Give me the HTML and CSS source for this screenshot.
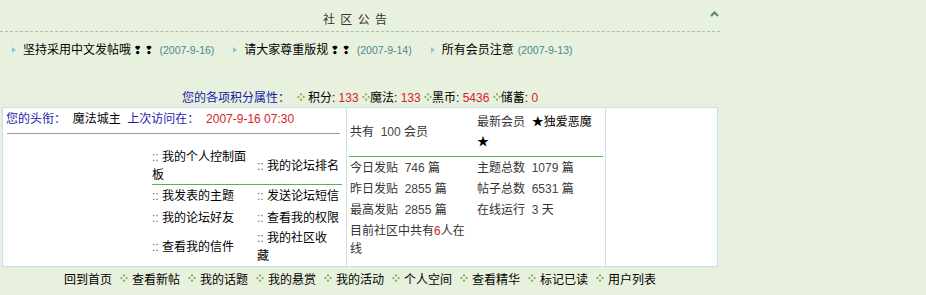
FILE: index.html
```html
<!DOCTYPE html>
<html lang="zh-CN">
<head>
    <meta charset="UTF-8">
    <meta name="viewport" content="width=device-width, initial-scale=1.0">
    <title>社区公告</title>
    <link rel="stylesheet" href="styles.css">
</head>
<body>
    <svg class="defs" width="0" height="0">
        <symbol id="clover" viewBox="0 0 9 9">
            <polygon points="4.5,0 6,1.5 4.5,3 3,1.5" />
            <polygon points="1.5,3 3,4.5 1.5,6 0,4.5" />
            <polygon points="7.5,3 9,4.5 7.5,6 6,4.5" />
            <polygon points="4.5,6 6,7.5 4.5,9 3,7.5" />
        </symbol>
    </svg>

    <div class="page">
        <div class="notice-head">
            <span class="notice-title">社 区 公 告</span>
            <svg class="fold" width="9" height="6" viewBox="0 0 9 6"><polyline points="1,5 4.5,1.5 8,5" /></svg>
        </div>
        <ul class="notice-list">
            <li><span class="arrow"></span>坚持采用中文发帖哦<span class="bang">❢❢</span><span class="date">(2007-9-16)</span></li>
            <li><span class="arrow"></span>请大家尊重版规<span class="bang">❢❢</span><span class="date">(2007-9-14)</span></li>
            <li><span class="arrow"></span>所有会员注意<span class="date">(2007-9-13)</span></li>
        </ul>

        <div class="credits">
            <span class="blue">您的各项积分属性：</span>&nbsp; <svg class="clover"><use href="#clover" /></svg> 积分: <span class="red">133</span> <svg class="clover"><use href="#clover" /></svg>魔法: <span class="red">133</span> <svg class="clover"><use href="#clover" /></svg>黑币: <span class="red">5436</span> <svg class="clover"><use href="#clover" /></svg>储蓄: <span class="red">0</span>
        </div>

        <table class="info">
            <tr>
                <td class="user">
                    <div class="user-line">
                        <span class="blue">您的头衔：</span>&nbsp; 魔法城主&nbsp; <span class="blue">上次访问在：</span>&nbsp; <span class="red">2007-9-16 07:30</span>
                    </div>
                    <div class="rule"></div>
                    <table class="links">
                        <tr class="first">
                            <td class="c1"><span class="dots">::</span> 我的个人控制面板</td>
                            <td class="c2"><span class="dots">::</span> 我的论坛排名</td>
                        </tr>
                        <tr>
                            <td class="c1"><span class="dots">::</span> 我发表的主题</td>
                            <td class="c2"><span class="dots">::</span> 发送论坛短信</td>
                        </tr>
                        <tr>
                            <td class="c1"><span class="dots">::</span> 我的论坛好友</td>
                            <td class="c2"><span class="dots">::</span> 查看我的权限</td>
                        </tr>
                        <tr>
                            <td class="c1"><span class="dots">::</span> 查看我的信件</td>
                            <td class="c2"><span class="dots">::</span> 我的社区收<br>藏</td>
                        </tr>
                    </table>
                </td>
                <td class="stats">
                    <table class="stat-table">
                        <tr class="head">
                            <td class="s1">共有&nbsp; <span class="num">100</span> 会员</td>
                            <td>最新会员&nbsp; <span class="member">★独爱恶魔<br>★</span></td>
                        </tr>
                        <tr>
                            <td class="s1">今日发贴&nbsp; <span class="num">746</span> 篇</td>
                            <td>主题总数&nbsp; <span class="num">1079</span> 篇</td>
                        </tr>
                        <tr>
                            <td class="s1">昨日发贴&nbsp; <span class="num">2855</span> 篇</td>
                            <td>帖子总数&nbsp; <span class="num">6531</span> 篇</td>
                        </tr>
                        <tr>
                            <td class="s1">最高发贴&nbsp; <span class="num">2855</span> 篇</td>
                            <td>在线运行&nbsp; <span class="num">3</span> 天</td>
                        </tr>
                        <tr class="online">
                            <td class="s1">目前社区中共有<span class="red">6</span>人在<br>线</td>
                            <td></td>
                        </tr>
                    </table>
                </td>
                <td class="blank"></td>
            </tr>
        </table>

        <div class="menu">
            <span>回到首页</span>
            <svg class="clover"><use href="#clover" /></svg><span>查看新帖</span>
            <svg class="clover"><use href="#clover" /></svg><span>我的话题</span>
            <svg class="clover"><use href="#clover" /></svg><span>我的悬赏</span>
            <svg class="clover"><use href="#clover" /></svg><span>我的活动</span>
            <svg class="clover"><use href="#clover" /></svg><span>个人空间</span>
            <svg class="clover"><use href="#clover" /></svg><span>查看精华</span>
            <svg class="clover"><use href="#clover" /></svg><span>标记已读</span>
            <svg class="clover"><use href="#clover" /></svg><span>用户列表</span>
        </div>
    </div>
</body>
</html>
```

FILE: styles.css
```css
body {
    margin: 0;
    background-color: #e8f1dd;
    font-family: "Liberation Sans", "Noto Sans CJK SC", sans-serif;
    font-size: 12px;
    color: #000;
}
.defs {
    position: absolute;
}
.page {
    width: 720px;
}
.blue {
    color: #1b1baa;
}
.red {
    color: #d8232c;
}

/* announcements */
.notice-head {
    display: flex;
    align-items: flex-start;
    height: 31px;
    border-bottom: 1px dashed #9fc3b3;
}
.notice-title {
    flex: 1;
    text-align: center;
    padding-top: 11px;
    line-height: 18px;
    word-spacing: 2px;
    color: #333;
}
.fold {
    margin: 11px 1px 0 0;
    fill: none;
    stroke: #4f8570;
    stroke-width: 2;
}
.notice-list {
    display: flex;
    height: 48px;
    margin: 0;
    padding: 9px 0 0 12px;
    list-style: none;
    line-height: 18px;
}
.notice-list li {
    margin-right: 19px;
}
.arrow {
    display: inline-block;
    width: 0;
    height: 0;
    margin-right: 7px;
    border-left: 4px solid #92c3dd;
    border-top: 3px solid transparent;
    border-bottom: 3px solid transparent;
    vertical-align: 1px;
}
.bang {
    font-family: "DejaVu Sans", sans-serif;
    font-size: 11px;
    letter-spacing: 2px;
    margin-left: 2px;
}
.date {
    margin-left: 4px;
    font-size: 10.5px;
    color: #4a8894;
}

/* credits */
.credits {
    line-height: 18px;
    text-align: center;
}
.clover {
    width: 8px;
    height: 8px;
    fill: #78b04c;
    vertical-align: 1px;
}

/* info table */
.info {
    width: 716px;
    margin-left: 2px;
    border-spacing: 1px;
    background-color: #c8e1e8;
}
.info > tbody > tr > td {
    background-color: #fff;
    vertical-align: top;
    padding: 0;
}
.user {
    width: 337px;
    padding: 2px 3px 1px 3px !important;
}
.user-line {
    line-height: 18px;
}
.rule {
    margin: 5px 3px 14px 1px;
    border-top: 1px solid #999;
}
.links {
    width: 190px;
    margin: 0 1px 0 auto;
    border-collapse: collapse;
}
.links td {
    height: 22px;
    padding: 0;
    line-height: 18px;
    vertical-align: middle;
}
.links .c1 {
    width: 103px;
}
.links .c2 {
    padding-left: 2px;
}
.links .first td {
    height: 36px;
    border-bottom: 1px solid #4db84d;
}
.dots {
    color: #666;
}
.stats {
    width: 258px;
}
.stat-table {
    width: 254px;
    margin-left: 2px;
    border-collapse: collapse;
    color: #333;
}
.stat-table td {
    height: 21px;
    padding: 0 0 0 1px;
    line-height: 18px;
    vertical-align: middle;
}
.stat-table .s1 {
    width: 126px;
}
.stat-table .head td {
    height: 48px;
    line-height: 20px;
    border-bottom: 1px solid #4db84d;
}
.member {
    color: #000;
}
.stat-table .online td {
    height: 36px;
    padding-top: 2px;
}
.num {
    color: #444;
}
.blank {
    width: 111px;
}

/* bottom menu */
.menu {
    display: flex;
    justify-content: center;
    align-items: center;
    height: 20px;
    padding-top: 1px;
}
.menu .clover {
    margin: 0 4px 0 8px;
}
```
